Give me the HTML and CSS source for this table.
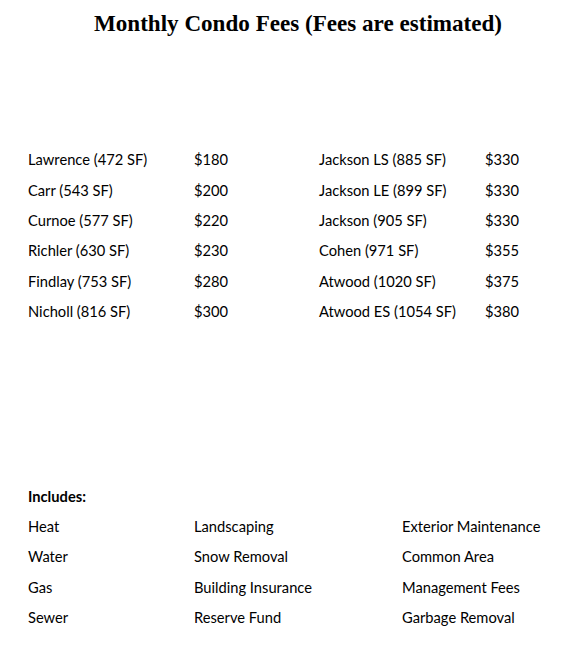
FILE: index.html
```html
<!DOCTYPE html>
<html>
<head>
<meta charset="utf-8">
<link rel="stylesheet" href="styles.css">
</head>
<body>
<div class="page">
  <h1 class="title">Monthly Condo Fees (Fees are estimated)</h1>
  <div class="fees">
    <span>Lawrence (472 SF)</span><span>$180</span><span>Jackson LS (885 SF)</span><span>$330</span>
    <span>Carr (543 SF)</span><span>$200</span><span>Jackson LE (899 SF)</span><span>$330</span>
    <span>Curnoe (577 SF)</span><span>$220</span><span>Jackson (905 SF)</span><span>$330</span>
    <span>Richler (630 SF)</span><span>$230</span><span>Cohen (971 SF)</span><span>$355</span>
    <span>Findlay (753 SF)</span><span>$280</span><span>Atwood (1020 SF)</span><span>$375</span>
    <span>Nicholl (816 SF)</span><span>$300</span><span>Atwood ES (1054 SF)</span><span>$380</span>
  </div>
  <div class="includes">
    <span class="inc-head">Includes:</span>
    <span>Heat</span><span>Landscaping</span><span>Exterior Maintenance</span>
    <span>Water</span><span>Snow Removal</span><span>Common Area</span>
    <span>Gas</span><span>Building Insurance</span><span>Management Fees</span>
    <span>Sewer</span><span>Reserve Fund</span><span>Garbage Removal</span>
  </div>
</div>
</body>
</html>
```
FILE: styles.css
```css
html, body {
  margin: 0;
  padding: 0;
  background: #ffffff;
}
.page {
  width: 568px;
  padding: 8px 0 0 28px;
  box-sizing: border-box;
  font-family: Lato, "Open Sans", sans-serif;
  font-size: 14.7px;
  color: #000000;
}
.title {
  margin: 0 0 0 -28px;
  text-align: center;
  font-family: "Liberation Serif", "Times New Roman", serif;
  font-weight: bold;
  font-size: 23.1px;
  line-height: 30px;
  padding-left: 28px;
}
.fees {
  margin-top: 106px;
  display: grid;
  grid-template-columns: 166px 125px 166px auto;
  grid-auto-rows: 30.4px;
  align-items: center;
}
.includes {
  margin-top: 154px;
  display: grid;
  grid-template-columns: 166px 208px auto;
  grid-auto-rows: 30.4px;
  align-items: center;
}
.inc-head {
  grid-column: 1 / -1;
  font-weight: bold;
}
```
